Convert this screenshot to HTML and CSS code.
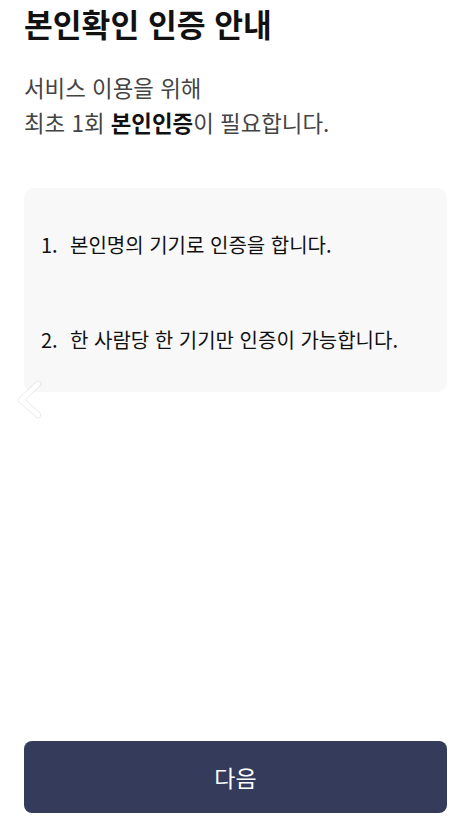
FILE: index.html
```html
<!DOCTYPE html>
<html lang="ko">
<head>
<meta charset="utf-8">
<link rel="stylesheet" href="styles.css">
</head>
<body>
<div class="page">
  <h1 class="title">본인확인 인증 안내</h1>
  <p class="desc">서비스 이용을 위해<br>최초 1회 <b>본인인증</b>이 필요합니다.</p>
  <div class="card-wrap">
    <ol class="card">
      <li><span class="num">1.</span><span>본인명의 기기로 인증을 합니다.</span></li>
      <li><span class="num">2.</span><span>한 사람당 한 기기만 인증이 가능합니다.</span></li>
    </ol>
    <svg class="chev" width="50" height="60" viewBox="0 0 50 60">
      <path d="M38 14 L21 30 L38 45" fill="none" stroke="#000" stroke-opacity="0.07" stroke-width="6.5" stroke-linecap="round" stroke-linejoin="round"/>
      <path d="M38 14 L21 30 L38 45" fill="none" stroke="#fff" stroke-width="4.5" stroke-linecap="round" stroke-linejoin="round"/>
    </svg>
  </div>
  <div class="spacer"></div>
  <button class="next">다음</button>
</div>
</body>
</html>
```
FILE: styles.css
```css
* { box-sizing: border-box; }
html, body { margin: 0; padding: 0; background: #fff; }
body {
  font-family: "Noto Sans CJK KR", "Noto Sans", sans-serif;
  color: #111;
}
.page {
  width: 467px;
  height: 836px;
  padding: 0 20px 23px 24px;
  display: flex;
  flex-direction: column;
}
.title {
  margin: 4px 0 0;
  font-size: 31.3px;
  font-weight: 700;
  line-height: 40px;
  color: #111;
}
.desc {
  margin: 26px 0 0;
  font-size: 22.4px;
  line-height: 35px;
  color: #444;
}
.desc b { color: #111; font-weight: 700; }
.card-wrap {
  position: relative;
  margin-top: 48px;
}
.card {
  list-style: none;
  margin: 0;
  padding: 40px 17px 0;
  background: #f8f8f8;
  border-radius: 10px;
  height: 204px;
  display: flex;
  flex-direction: column;
  gap: 61px;
}
.card li {
  display: flex;
  font-size: 20px;
  line-height: 34px;
  color: #111;
}
.num { width: 29px; }
.chev {
  position: absolute;
  left: -24px;
  top: 182px;
}
.spacer { flex: 1; }
.next {
  height: 72px;
  border: none;
  border-radius: 8px;
  background: #343b5b;
  color: #fff;
  font-family: inherit;
  font-size: 23px;
  font-weight: 400;
}
```
